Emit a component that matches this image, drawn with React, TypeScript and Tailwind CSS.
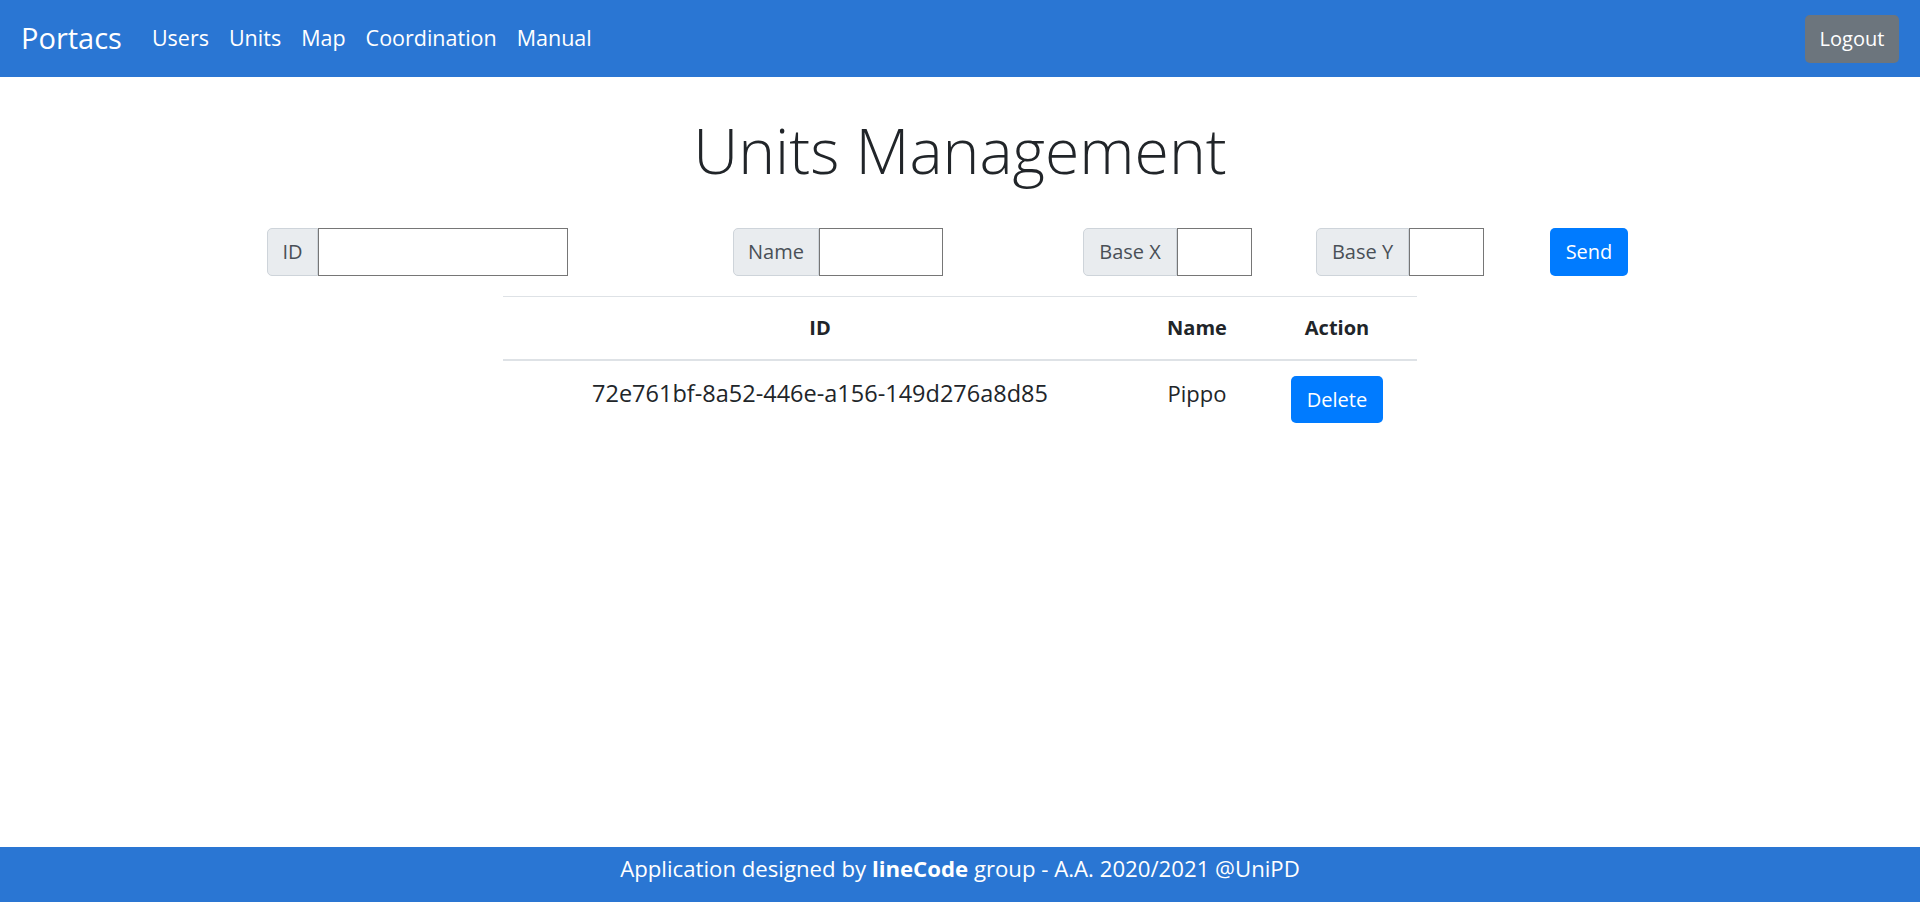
import React from "react";

export default function App() {
  const links = ["Users", "Units", "Map", "Coordination", "Manual"];
  return (
    <div className="min-h-[902px] flex flex-col font-['Open_Sans',sans-serif] text-[#212529]">
      <nav className="h-[77px] bg-[#2a76d3] flex items-center pl-[21px] pr-[21px] shrink-0">
        <span className="text-[29px] text-white mr-[20px] leading-none -mt-[2px]">Portacs</span>
        {links.map((l) => (
          <span key={l} className="px-[10px] text-[21.5px] text-white leading-none -mt-[2px]">
            {l}
          </span>
        ))}
        <button className="ml-auto w-[94px] h-[48px] bg-[#6c757d] text-white text-[20px] rounded-[5px]">
          Logout
        </button>
      </nav>

      <main className="flex-1">
        <h1 className="text-center text-[62.5px] font-light leading-[74px] mt-[36px] mb-[41px]">
          Units Management
        </h1>

        <div className="flex items-start pl-[267px] text-[20px]">
          <div className="flex">
            <span className="w-[51px] h-[48px] flex items-center justify-center border border-[#ced4da] bg-[#e9ecef] rounded-l-[5px] text-[#495057]">
              ID
            </span>
            <input className="w-[250px] h-[48px] border border-[#767676] outline-none" />
          </div>
          <div className="flex ml-[165px]">
            <span className="w-[86px] h-[48px] flex items-center justify-center border border-[#ced4da] bg-[#e9ecef] rounded-l-[5px] text-[#495057]">
              Name
            </span>
            <input className="w-[124px] h-[48px] border border-[#767676] outline-none" />
          </div>
          <div className="flex ml-[140px]">
            <span className="w-[94px] h-[48px] flex items-center justify-center border border-[#ced4da] bg-[#e9ecef] rounded-l-[5px] text-[#495057]">
              Base X
            </span>
            <input className="w-[75px] h-[48px] border border-[#767676] outline-none" />
          </div>
          <div className="flex ml-[64px]">
            <span className="w-[93px] h-[48px] flex items-center justify-center border border-[#ced4da] bg-[#e9ecef] rounded-l-[5px] text-[#495057]">
              Base Y
            </span>
            <input className="w-[75px] h-[48px] border border-[#767676] outline-none" />
          </div>
          <button className="ml-[66px] w-[78px] h-[48px] bg-[#007bff] text-white rounded-[5px]">
            Send
          </button>
        </div>

        <div className="mt-[20px] w-[914px] mx-auto text-[20px]">
          <div className="grid grid-cols-[634px_120px_160px] border-t border-[#dee2e6] border-b-2 font-bold">
            <div className="py-[16px] leading-[30px] text-center">ID</div>
            <div className="py-[16px] leading-[30px] text-center">Name</div>
            <div className="py-[16px] leading-[30px] text-center">Action</div>
          </div>
          <div className="grid grid-cols-[634px_120px_160px]">
            <div className="pt-[17px] leading-[30px] text-center text-[23.5px]">
              72e761bf-8a52-446e-a156-149d276a8d85
            </div>
            <div className="pt-[17px] leading-[30px] text-center text-[22px]">Pippo</div>
            <div className="py-[15px] flex justify-center">
              <button className="w-[92px] h-[47px] bg-[#007bff] text-white rounded-[5px]">Delete</button>
            </div>
          </div>
        </div>
      </main>

      <footer className="h-[55px] shrink-0 bg-[#2a76d3] flex items-start justify-center pt-[7px] text-white text-[22.2px] leading-[30px]">
        <span>
          Application designed by <b className="font-bold">lineCode</b> group - A.A. 2020/2021 @UniPD
        </span>
      </footer>
    </div>
  );
}
